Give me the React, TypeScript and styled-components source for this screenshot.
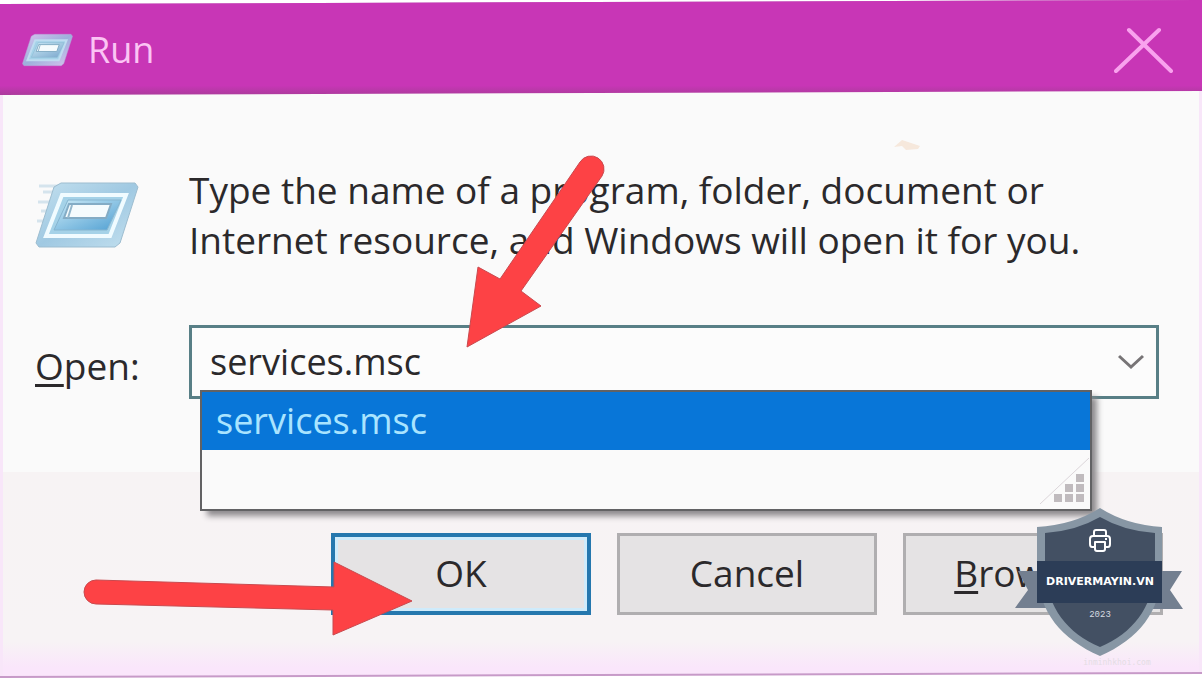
import React from "react";
import styled, { createGlobalStyle } from "styled-components";

const GlobalStyle = createGlobalStyle`
  * { box-sizing: border-box; }
  body { margin: 0; background: #fff; font-family: "Open Sans", "Noto Sans", sans-serif; }
`;

const Dialog = styled.main`
  position: relative;
  display: flex;
  flex-direction: column;
  min-height: 100vh;
  color: #2b292b;
  font-size: 37px;
  line-height: 50px;
  background: #c79ac8;
  clip-path: polygon(0 4px, 100% 0, 100% calc(100% - 5px), 0 calc(100% - 1px));
`;

const TitleBar = styled.header`
  position: relative;
  z-index: 1;
  display: flex;
  align-items: center;
  gap: 15px;
  height: 95px;
  margin-bottom: -5px;
  padding: 4px 28px 0 22px;
  background: linear-gradient(#c836b6 90%, #ab3b9c);
  clip-path: polygon(0 0, 100% 0, 100% calc(100% - 4px), 0 100%);
`;

const Title = styled.h1`
  flex: 1;
  margin: 0;
  color: #fbc4f4;
  font-size: 36px;
  font-weight: 400;
  line-height: 50px;
`;

const CloseButton = styled.button`
  display: flex;
  padding: 0;
  border: 0;
  background: none;
`;

const Content = styled.section`
  display: flex;
  flex-direction: column;
  gap: 60px;
  padding: 75px 40px 73px 32px;
  border: solid #f8e6f9;
  border-width: 0 3px;
  background: #fafafa;
`;

const MessageRow = styled.div`
  display: flex;
  align-items: center;
`;

const IconCell = styled.div`
  display: flex;
  flex: none;
  width: 154px;
`;

const Message = styled.p`
  max-width: 940px;
  margin: 0;
`;

const OpenRow = styled.div`
  display: flex;
  align-items: center;
`;

const OpenLabel = styled.label`
  flex: none;
  width: 154px;
  padding-top: 8px;
`;

const Mnemonic = styled.span`
  text-decoration: underline;
  text-decoration-thickness: 3px;
  text-underline-offset: 4px;
  text-decoration-skip-ink: none;
`;

const ComboBox = styled.div`
  position: relative;
  z-index: 1;
  display: flex;
  flex: 1;
  height: 74px;
  border: 3px solid #587f86;
  background: #fcfcfc;
  font-size: 36px;
`;

const ComboInput = styled.input`
  flex: 1;
  min-width: 0;
  padding: 0 0 0 18px;
  border: 0;
  outline: 0;
  color: inherit;
  background: none;
  font: inherit;
`;

const ComboToggle = styled.button`
  display: flex;
  align-items: center;
  padding: 0 12px;
  border: 0;
  background: none;
`;

const Suggestions = styled.ul`
  position: absolute;
  top: 62px;
  right: 64px;
  left: 8px;
  height: 121px;
  margin: 0;
  padding: 0;
  border: 2px solid #626264;
  background: #fafafa;
  box-shadow: 6px 6px 6px -1px #8d8a8d;
  list-style: none;
`;

const Suggestion = styled.li`
  height: 58px;
  padding: 4px 14px;
  color: #a9e4ff;
  background: #0876d8;
`;

const Grip = styled.svg`
  position: absolute;
  right: 0;
  bottom: 4px;
`;

const Actions = styled.footer`
  display: flex;
  flex: 1;
  justify-content: flex-end;
  align-items: flex-start;
  gap: 26px;
  padding: 61px 36px 60px;
  border: solid #f8e6f9;
  border-width: 0 3px;
  background: linear-gradient(#f7f3f4, #f7f3f5 170px, #fae6fb 196px);
  clip-path: polygon(0 0, 100% 0, 100% calc(100% - 7px), 0 calc(100% - 3px));
`;

const ActionButton = styled.button<{ $primary?: boolean }>`
  width: 260px;
  height: 82px;
  padding: 0 0 2px;
  border: ${(p) => (p.$primary ? "4px solid #2577ae" : "3px solid #b0aeb0")};
  color: inherit;
  background: #e5e3e4;
  box-shadow: ${(p) => (p.$primary ? "inset 0 0 0 3px #cfebfb" : "none")};
  font: inherit;
`;

const Annotation = styled.svg<{ $left: number; $top: number }>`
  position: absolute;
  z-index: 2;
  left: ${(p) => p.$left}px;
  top: ${(p) => p.$top}px;
  pointer-events: none;
`;

const Watermark = styled.svg`
  position: absolute;
  z-index: 2;
  right: 19px;
  bottom: 9px;
  pointer-events: none;
`;

const tones = {
  blue: { light: "#c3e0ef", mid: "#a0c9e2", edge: "#9dbdd0", rim: "#f0fbff", screen: "#4f9fd2" },
  violet: { light: "#d9c4ee", mid: "#9db0dc", edge: "#b9a0d8", rim: "#bfdcf0", screen: "#7aa6cc" },
};

function RunIcon({ width, height, tone }: { width: number; height: number; tone: keyof typeof tones }) {
  const c = tones[tone];
  return (
    <svg width={width} height={height} viewBox="0 0 104 68" aria-hidden="true">
      <defs>
        <linearGradient id={`frame-${tone}`} x1="0" y1="0" x2="1" y2="1">
          <stop offset="0" stopColor={c.light} />
          <stop offset="0.5" stopColor={c.mid} />
          <stop offset="1" stopColor={c.light} />
        </linearGradient>
        <linearGradient id={`screen-${tone}`} x1="0" y1="0" x2="1" y2="1">
          <stop offset="0" stopColor="#cdebf7" />
          <stop offset="1" stopColor={c.screen} />
        </linearGradient>
      </defs>
      {tone === "blue" && <path d="M4 5h26M8 11h18M3 21h20M6 30h14M2 40h14" stroke="#d5e4ed" strokeWidth="3" />}
      <path
        d="M26 2H100L103 6L85 62L80 66H4L1 62L19 6Z"
        fill={`url(#frame-${tone})`}
        stroke={c.edge}
        strokeWidth="1"
      />
      <path d="M27 14H91L75 55H11Z" fill="#a5d2e8" stroke={c.rim} strokeWidth="4" />
      <path d="M33 19H86L72 49H19Z" fill={`url(#screen-${tone})`} stroke="#86b5d0" strokeWidth="1" />
      <path d="M34 23H76L71 37H29Z" fill="#f5fbfd" stroke="#84acc5" strokeWidth="2" />
      <path d="M37 24L33 37" stroke="#93b7cc" strokeWidth="2" />
    </svg>
  );
}

function PrinterBadge() {
  return (
    <Watermark width="168" height="164" viewBox="1015 506 168 164" role="img" aria-label="drivermayin.vn">
      <path d="M1018 571H1052V608H1015L1028 590ZM1182 571H1148V609H1183L1170 590Z" fill="#737f90" />
      <path
        d="M1100 508Q1127 525 1162 527V572C1160 612 1139 639 1100 656C1061 639 1039 612 1037 572V527Q1073 525 1100 508Z"
        fill="#8796a4"
      />
      <path
        d="M1100 517Q1124 531 1155 533V572C1152 608 1133 633 1100 647C1067 633 1048 608 1045 572V533Q1076 531 1100 517Z"
        fill="#435063"
      />
      <path d="M1037 561H1162V603H1037Z" fill="#2c3d57" />
      <g fill="none" stroke="#fff" strokeWidth="2" strokeLinejoin="round">
        <path d="M1094 535V532Q1094 530 1096 530H1104Q1106 530 1106 532V535" />
        <path d="M1094 547H1092Q1090 547 1090 544V539Q1090 536 1093 536H1107Q1110 536 1110 539V544Q1110 547 1108 547H1106" />
        <path d="M1095 542H1105V549Q1105 551 1103 551H1097Q1095 551 1095 549Z" />
        <path d="M1105 539h2" />
      </g>
      <text x="1100" y="585" textAnchor="middle" fill="#fff" fontFamily="DejaVu Sans, sans-serif" fontWeight="700" fontSize="11">
        DRIVERMAYIN.VN
      </text>
      <text x="1100" y="617" textAnchor="middle" fill="#d5dae0" fontFamily="Liberation Mono, monospace" fontSize="9">
        2023
      </text>
      <text x="1117" y="665" textAnchor="middle" fill="#e4dde4" fontFamily="DejaVu Sans Mono, monospace" fontSize="8">
        inminhkhoi.com
      </text>
    </Watermark>
  );
}

export default function App() {
  return (
    <>
      <GlobalStyle />
      <Dialog>
        <TitleBar>
          <RunIcon width={51} height={34} tone="violet" />
          <Title>Run</Title>
          <CloseButton aria-label="Close">
            <svg width="60" height="46" viewBox="0 0 60 46" fill="none" stroke="#f9a2ee" strokeWidth="4" strokeLinecap="round">
              <path d="M15 3L57 44M45 3L2 44" />
            </svg>
          </CloseButton>
        </TitleBar>
        <Content>
          <MessageRow>
            <IconCell>
              <RunIcon width={104} height={68} tone="blue" />
            </IconCell>
            <Message>
              Type the name of a program, folder, document or Internet resource, and Windows will open it for you.
            </Message>
          </MessageRow>
          <OpenRow>
            <OpenLabel htmlFor="open">
              <Mnemonic>O</Mnemonic>pen:
            </OpenLabel>
            <ComboBox>
              <ComboInput id="open" type="text" defaultValue="services.msc" />
              <ComboToggle aria-label="Show suggestions">
                <svg width="26" height="16" viewBox="0 0 26 16" fill="none" stroke="#777476" strokeWidth="3">
                  <path d="M1 2L13 13L25 2" />
                </svg>
              </ComboToggle>
              <Suggestions>
                <Suggestion>services.msc</Suggestion>
                <Grip width="52" height="48" viewBox="0 0 52 48" aria-hidden="true">
                  <path d="M2 47L51 1" stroke="#dcd6da" strokeWidth="1" />
                  <path
                    d="M38 17h8v8h-8zM27 27h8v8h-8zM38 27h8v8h-8zM16 37h8v8h-8zM27 37h8v8h-8zM38 37h8v8h-8z"
                    fill="#c0bbbe"
                  />
                </Grip>
              </Suggestions>
            </ComboBox>
          </OpenRow>
        </Content>
        <Actions>
          <ActionButton $primary>OK</ActionButton>
          <ActionButton>Cancel</ActionButton>
          <ActionButton>
            <Mnemonic>B</Mnemonic>rowse...
          </ActionButton>
        </Actions>
        <Annotation $left={892} $top={138} width="32" height="16" viewBox="0 0 32 16" aria-hidden="true">
          <path d="M2 9L10 2L16 4L28 8L26 11L14 12L10 8Z" fill="#f6e8dc" />
        </Annotation>
        <Annotation $left={460} $top={150} width="150" height="200" viewBox="460 150 150 200" aria-hidden="true">
          <path
            d="M467 347L478 267L500 279L580 162A13 13 0 0 1 602 176L521 291L541 306Z"
            fill="#fd4245"
            stroke="#c9494e"
            strokeWidth="1"
          />
        </Annotation>
        <Annotation $left={80} $top={555} width="340" height="90" viewBox="80 555 340 90" aria-hidden="true">
          <path
            d="M412 601L334 562V587L96 580A12 12 0 0 0 96 604L333 610V635Z"
            fill="#fd4245"
            stroke="#c9494e"
            strokeWidth="1"
          />
        </Annotation>
        <PrinterBadge />
      </Dialog>
    </>
  );
}
